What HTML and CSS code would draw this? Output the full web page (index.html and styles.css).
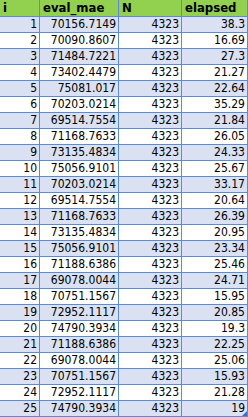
FILE: index.html
```html
<!DOCTYPE html>
<html>
<head>
<meta charset="utf-8">
<link rel="stylesheet" href="styles.css">
</head>
<body>
<div class="sheet">
<table class="grid">
<thead>
<tr><th class="c-i">i</th><th class="c-mae">eval_mae</th><th class="c-n">N</th><th class="c-el">elapsed</th></tr>
</thead>
<tbody>
<tr><td>1</td><td>70156.7149</td><td>4323</td><td>38.3</td></tr>
<tr><td>2</td><td>70090.8607</td><td>4323</td><td>16.69</td></tr>
<tr><td>3</td><td>71484.7221</td><td>4323</td><td>27.3</td></tr>
<tr><td>4</td><td>73402.4479</td><td>4323</td><td>21.27</td></tr>
<tr><td>5</td><td>75081.017</td><td>4323</td><td>22.64</td></tr>
<tr><td>6</td><td>70203.0214</td><td>4323</td><td>35.29</td></tr>
<tr><td>7</td><td>69514.7554</td><td>4323</td><td>21.84</td></tr>
<tr><td>8</td><td>71168.7633</td><td>4323</td><td>26.05</td></tr>
<tr><td>9</td><td>73135.4834</td><td>4323</td><td>24.33</td></tr>
<tr><td>10</td><td>75056.9101</td><td>4323</td><td>25.67</td></tr>
<tr><td>11</td><td>70203.0214</td><td>4323</td><td>33.17</td></tr>
<tr><td>12</td><td>69514.7554</td><td>4323</td><td>20.64</td></tr>
<tr><td>13</td><td>71168.7633</td><td>4323</td><td>26.39</td></tr>
<tr><td>14</td><td>73135.4834</td><td>4323</td><td>20.95</td></tr>
<tr><td>15</td><td>75056.9101</td><td>4323</td><td>23.34</td></tr>
<tr><td>16</td><td>71188.6386</td><td>4323</td><td>25.46</td></tr>
<tr><td>17</td><td>69078.0044</td><td>4323</td><td>24.71</td></tr>
<tr><td>18</td><td>70751.1567</td><td>4323</td><td>15.95</td></tr>
<tr><td>19</td><td>72952.1117</td><td>4323</td><td>20.85</td></tr>
<tr><td>20</td><td>74790.3934</td><td>4323</td><td>19.3</td></tr>
<tr><td>21</td><td>71188.6386</td><td>4323</td><td>22.25</td></tr>
<tr><td>22</td><td>69078.0044</td><td>4323</td><td>25.06</td></tr>
<tr><td>23</td><td>70751.1567</td><td>4323</td><td>15.93</td></tr>
<tr><td>24</td><td>72952.1117</td><td>4323</td><td>21.28</td></tr>
<tr><td>25</td><td>74790.3934</td><td>4323</td><td>19</td></tr>
</tbody>
</table>
<span class="handle"></span>
</div>
</body>
</html>
```
FILE: styles.css
```css
html, body {
  margin: 0;
  padding: 0;
  background: #ffffff;
}
.sheet {
  position: relative;
  width: 248px;
  height: 417px;
}
.grid {
  border-collapse: separate;
  border-spacing: 0;
  table-layout: fixed;
  width: 248px;
  font-family: "DejaVu Sans Condensed", "DejaVu Sans", Verdana, sans-serif;
  font-stretch: condensed;
  font-size: 12px;
  color: #000000;
}
.grid th, .grid td {
  box-sizing: border-box;
  padding: 0;
  border-right: 1px solid #5b8bd6;
  border-bottom: 1px solid #5b8bd6;
  white-space: nowrap;
  overflow: hidden;
}
.grid th {
  height: 17px;
  line-height: 16px;
  background: #92d050;
  text-align: left;
  padding-left: 3px;
  font-weight: bold;
  font-size: 13px;
}
.c-i { width: 40px; }
.c-mae { width: 79px; }
.c-n { width: 63px; }
.c-el { width: 66px; }
.grid td {
  height: 16px;
  line-height: 15px;
  text-align: right;
  padding-right: 2px;
}
.grid tbody tr:nth-child(odd) td {
  background: #d9e1f2;
}
.handle {
  position: absolute;
  right: 1px;
  bottom: 1px;
  width: 0;
  height: 0;
  border-left: 5px solid transparent;
  border-bottom: 5px solid #3a6fc4;
}
```
